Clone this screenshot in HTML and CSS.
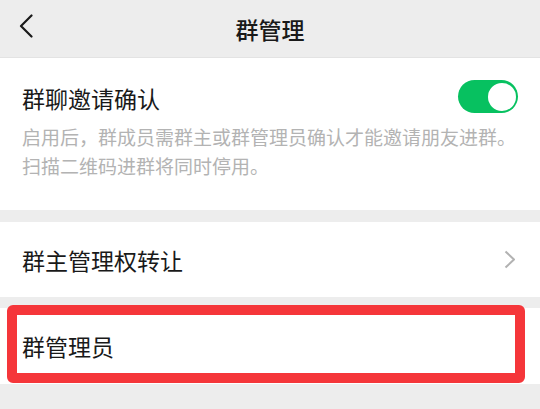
FILE: index.html
```html
<!DOCTYPE html>
<html lang="zh-CN">
<head>
<meta charset="utf-8">
<title>群管理</title>
<link rel="stylesheet" href="styles.css">
</head>
<body>
<header class="topbar">
  <span class="back">
    <svg width="14" height="24" viewBox="0 0 14 24"><path d="M12.5 1.5 L2 12 L12.5 22.5" fill="none" stroke="#1a1a1a" stroke-width="2.2" stroke-linecap="round" stroke-linejoin="round"/></svg>
  </span>
  <h1 class="title">群管理</h1>
  <span></span>
</header>

<section class="card invite">
  <div class="invite-row">
    <span class="item-label invite-label">群聊邀请确认</span>
    <span class="switch"><span class="knob"></span></span>
  </div>
  <p class="desc">启用后，群成员需群主或群管理员确认才能邀请朋友进群。<br>扫描二维码进群将同时停用。</p>
</section>

<section class="card row transfer">
  <span class="item-label">群主管理权转让</span>
  <svg class="chevron" width="12" height="19" viewBox="0 0 12 19"><path d="M1.5 1.5 L10 9.5 L1.5 17.5" fill="none" stroke="#b2b2b2" stroke-width="2" stroke-linejoin="round"/></svg>
</section>

<section class="card row admins">
  <span class="item-label">群管理员</span>
  <span class="highlight"></span>
</section>
</body>
</html>
```
FILE: styles.css
```css
* { box-sizing: border-box; }
html, body { margin: 0; padding: 0; }
body {
  background: #ededed;
  font-family: "Noto Sans CJK SC", "Noto Sans", sans-serif;
  color: #191919;
  width: 540px;
  height: 409px;
  overflow: hidden;
}
.topbar {
  height: 58px;
  display: grid;
  grid-template-columns: 1fr auto 1fr;
  align-items: center;
  background: #ededed;
  border-bottom: 1px solid #e3e3e3;
}
.back {
  display: flex;
  padding-left: 19px;
  margin-bottom: 5px;
}
.title {
  margin: 0;
  font-size: 23px;
  font-weight: 500;
  line-height: 30px;
  color: #191919;
}
.card { background: #fff; }
.invite {
  height: 152px;
  padding: 22px 22px 0 22px;
}
.invite-row {
  display: flex;
  justify-content: space-between;
  align-items: flex-start;
}
.item-label {
  font-size: 23px;
  line-height: 37px;
}
.switch {
  width: 60px;
  height: 33px;
  border-radius: 17px;
  background: #07c160;
  display: flex;
  justify-content: flex-end;
  align-items: center;
  padding: 0 2.5px;
}
.knob {
  width: 28px;
  height: 28px;
  border-radius: 50%;
  background: #fff;
}
.desc {
  margin: 6px 0 0 0;
  font-size: 19px;
  line-height: 28.5px;
  color: #b3b3b3;
  white-space: nowrap;
}
.row {
  display: flex;
  align-items: center;
  justify-content: space-between;
  padding: 0 24px 0 22px;
}
.transfer {
  margin-top: 12px;
  height: 75px;
}
.transfer .item-label { padding-top: 2px; }
.admins {
  margin-top: 11px;
  height: 76px;
  position: relative;
}
.highlight {
  position: absolute;
  top: -3px;
  left: 7px;
  width: 518px;
  height: 78px;
  border: 10px solid #f5363a;
  border-radius: 6px;
}
```
